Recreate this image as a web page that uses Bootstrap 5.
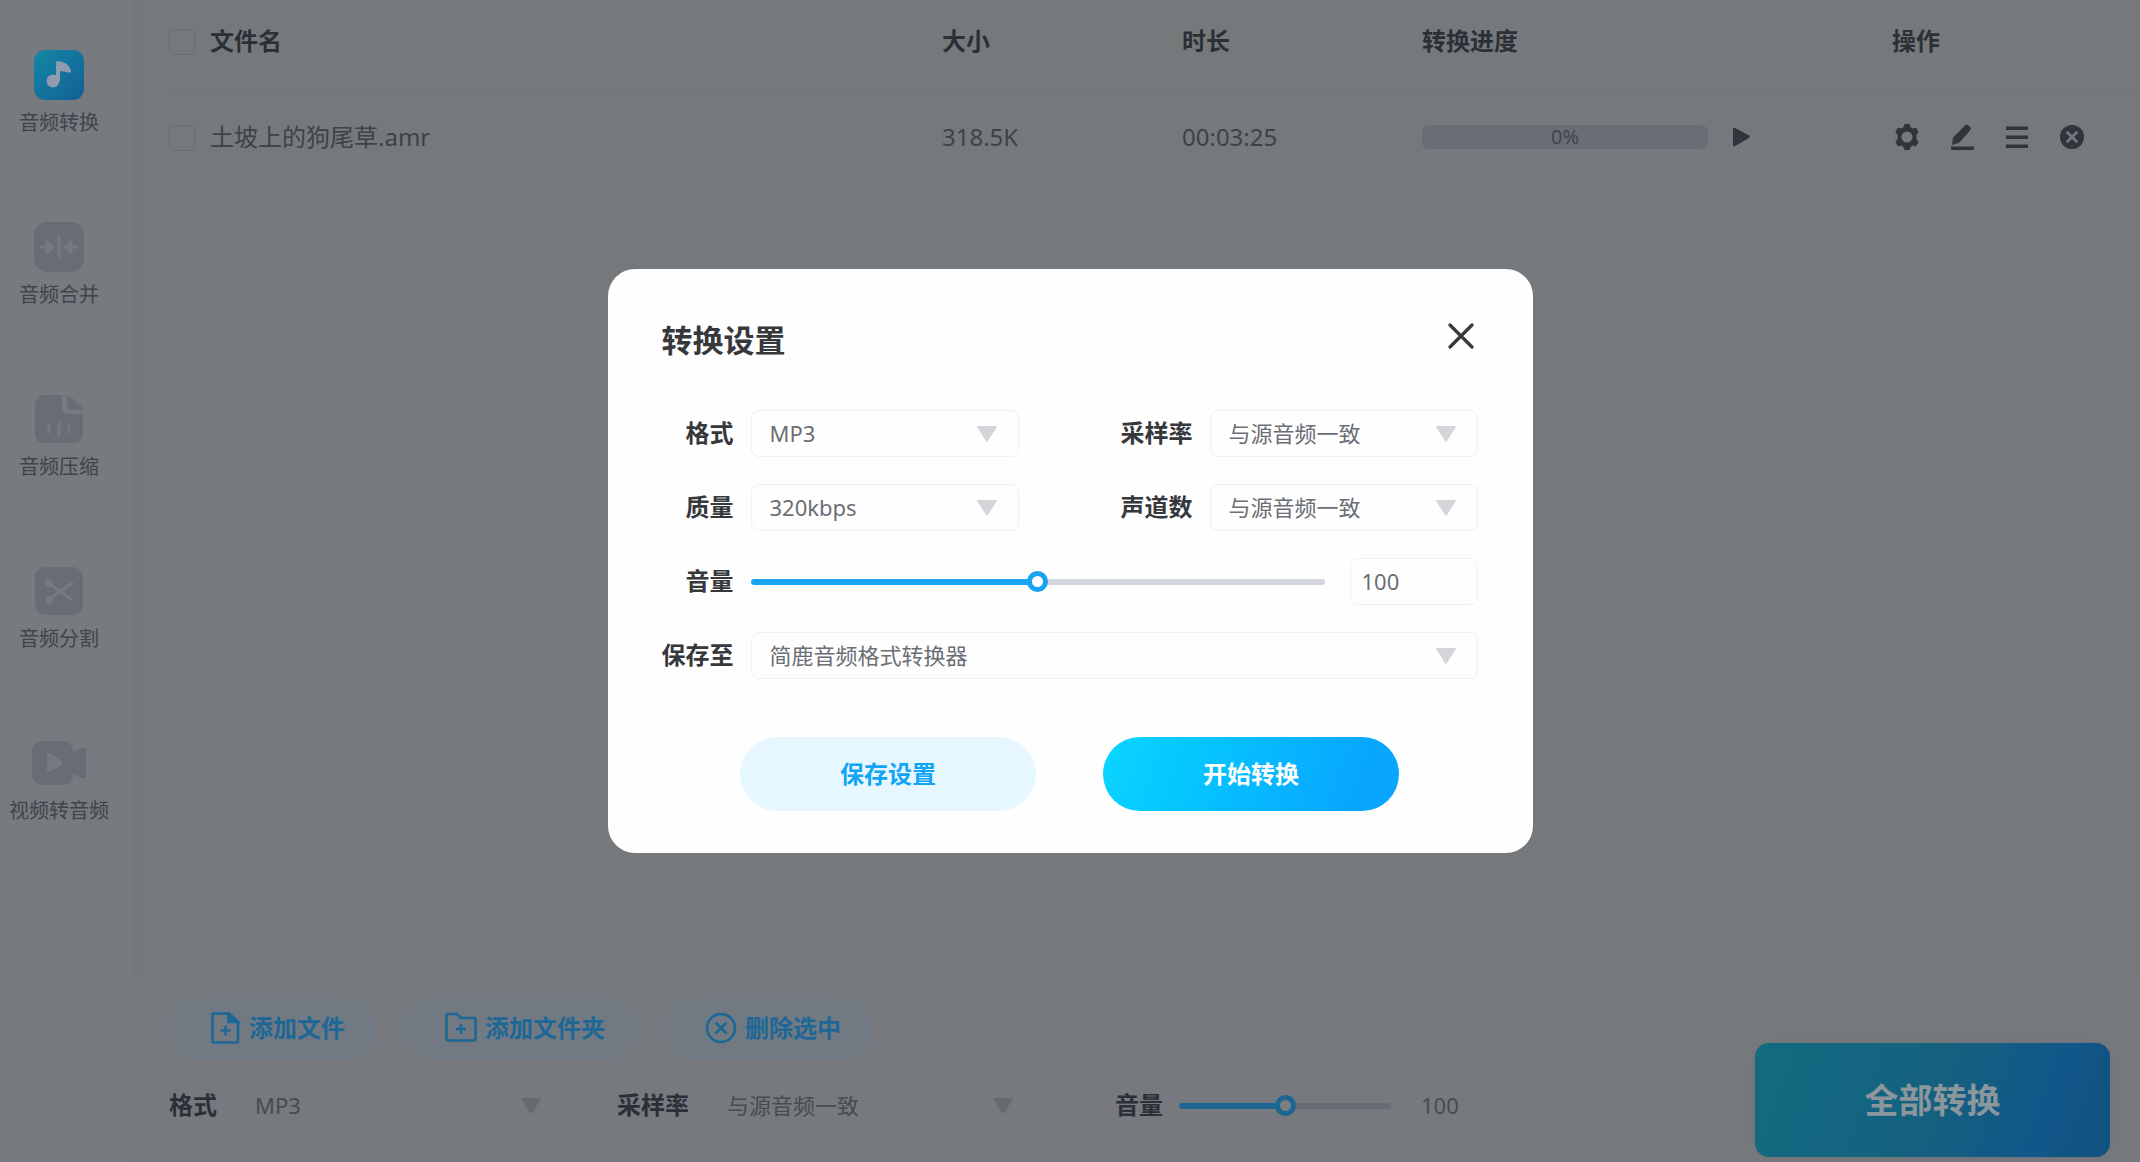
<!DOCTYPE html>
<html lang="zh-CN">
<head>
<meta charset="utf-8">
<meta name="viewport" content="width=device-width, initial-scale=1">
<title>音频格式转换器</title>
<link href="https://cdn.jsdelivr.net/npm/bootstrap@5.3.0/dist/css/bootstrap.min.css" rel="stylesheet">
<style>
  :root {
    --page: #75797c;
    --panel: #777a7f;
    --ink: #2b3037;
    --ink-soft: #3e4247;
    --muted: #696c74;
    --blue-dim: #1d6796;
    --blue: #1aa3f0;
  }
  body {
    background: var(--page);
    color: var(--ink-soft);
    font-family: "Noto Sans", "Noto Sans CJK SC", sans-serif;
    font-size: 24px;
    line-height: 32px;
  }
  /* side menu */
  .side-menu {
    width: 130px;
    padding: 50px 12px 0 0;
    gap: 85px;
    background: var(--panel);
    box-shadow: 2px 0 8px #72758066;
  }
  .side-link {
    color: #41444b;
    font-size: 20px;
    line-height: 28px;
    gap: 9px;
  }
  .side-link svg { width: 54px; height: 50px; }
  /* file list */
  .list-area { padding-left: 39px; }
  .file-table { table-layout: fixed; margin: 0; --bs-table-bg: transparent; }
  .file-table > :not(caption) > * > * {
    padding: 0;
    border: 0;
    color: var(--ink-soft);
    vertical-align: middle;
  }
  .file-table thead th { height: 88px; padding-bottom: 5px; color: var(--ink); border-bottom: 1px solid #737679; }
  .file-table tbody td { height: 98px; }
  .col-mid { width: 240px; }
  .col-bar { width: 470px; }
  .col-ops { width: 248px; }
  .form-check-input.pick {
    width: 26px;
    height: 26px;
    margin: 2px 15px 0 0;
    border: 1px solid #696d73;
    border-radius: 4px;
    background-color: transparent;
    flex: none;
  }
  .file-progress {
    width: 286px;
    height: 24px;
    border-radius: 7px;
    background: #6a6c76;
    color: #42454c;
    font-size: 20px;
    line-height: 24px;
  }
  .icon-btn { border: 0; padding: 0; background: none; color: #2f353c; line-height: 0; }
  .ops-group { gap: 27px; padding-left: 1px; }
  /* bottom bar */
  .bottom-bar { padding: 24px 30px 5px 39px; background: #76797d; }
  .bar-tools { margin-bottom: 28px; }
  .tool-btn {
    height: 62px;
    padding: 0 32px 2px 40px;
    gap: 8px;
    border: 0;
    border-radius: 31px;
    background: #717983;
    color: var(--blue-dim);
    font-size: 24px;
    font-weight: 700;
  }
  .tool-row { gap: 28px; }
  .quick-row { margin-top: 22px; }
  .field-label { color: var(--ink); font-weight: 700; margin: 0; padding-bottom: 2px; white-space: nowrap; flex: none; }
  .form-select.pick-list, .form-control.num-box {
    height: 47px;
    border: 1px solid #f0f1f2;
    border-radius: 8px;
    color: #6b6e74;
    font-size: 22px;
    line-height: 30px;
    padding: 0 40px 2px 18px;
    background-color: transparent;
  }
  .form-control.num-box { padding: 0 11px 2px; width: 128px; flex: none; }
  .form-select.pick-list {
    background-image: url("data:image/svg+xml,%3Csvg xmlns='http://www.w3.org/2000/svg' viewBox='0 0 22 18'%3E%3Cpath d='M2 1h18q1.500 0 .6 1.500L12 16q-1 1.500-2 0L1.400 2.500Q.5 1 2 1z' fill='%23d3d5d8'/%3E%3C/svg%3E");
    background-size: 22px 18px;
    background-position: right 20px center;
  }
  .quick-row .pick-list, .quick-row .num-box { border-color: #727579; color: #484b50; padding-left: 13px; }
  .quick-row .pick-list {
    background-image: url("data:image/svg+xml,%3Csvg xmlns='http://www.w3.org/2000/svg' viewBox='0 0 22 18'%3E%3Cpath d='M2 1h18q1.500 0 .6 1.500L12 16q-1 1.500-2 0L1.400 2.500Q.5 1 2 1z' fill='%23666a70'/%3E%3C/svg%3E");
  }
  .quick-row .pick-list { width: 322px; }
  .quick-row .num-box { width: 96px; }
  .quick-row .form-range { width: 212px; }
  .quick-gap { margin-left: 54px; }
  .quick-gap-wide { margin-left: 80px; }
  .form-range.vol {
    --fill: var(--blue);
    --rest: #d3d6de;
    --hole: #fff;
    height: 24px;
  }
  .quick-row .form-range.vol { --fill: #1d6592; --rest: #686b73; --hole: #7b7f84; }
  .form-range.vol::-webkit-slider-runnable-track {
    height: 6px;
    border-radius: 3px;
    background: linear-gradient(90deg, var(--fill) 50%, var(--rest) 50%);
  }
  .form-range.vol::-webkit-slider-thumb {
    width: 21px;
    height: 21px;
    margin-top: -8px;
    border: 5px solid var(--fill);
    background: var(--hole);
    box-shadow: none;
  }
  .all-btn {
    width: 355px;
    height: 114px;
    border: 0;
    border-radius: 14px;
    background: linear-gradient(110deg, #126b80, #15617f 50%, #11578a 80%, #12527d);
    box-shadow: 0 0 10px #6c708088;
    color: #8b969d;
    font-size: 34px;
    font-weight: 700;
  }
  /* settings dialog */
  .settings-layer { padding-bottom: 40px; }
  .settings-box {
    width: 925px;
    max-width: 100%;
    padding: 51px 55px 42px 54px;
    border: 0;
    border-radius: 27px;
    background: #fefefe;
  }
  .settings-title { font-size: 31px; line-height: 40px; font-weight: 700; color: #36383b; margin: 0; }
  .settings-box .field-label { width: 72px; text-align: right; color: #36383b; }
  .close-btn { border: 0; padding: 0 4px 8px; background: none; line-height: 0; }
  .settings-rows { margin-top: 50px; gap: 27px; }
  .field-pair { gap: 102px; }
  .field-cell { gap: 17px; flex: 1 1 0; min-width: 0; }
  .dialog-actions { margin-top: 58px; gap: 67px; }
  .pill-btn { width: 296px; height: 74px; border: 0; border-radius: 37px; font-size: 24px; font-weight: 700; }
  .pill-save { background: #e7f7ff; color: #12a5f5; }
  .pill-start { background: linear-gradient(110deg, #0ad3ff 5%, #05c6ff 30%, #08a6ff 85%); color: #fff; }
</style>
</head>
<body>
<div class="d-flex min-vh-100">
  <nav class="side-menu d-flex flex-column align-items-center flex-shrink-0" aria-label="功能">
    <a href="#" class="side-link d-flex flex-column align-items-center text-decoration-none text-nowrap">
      <svg viewBox="0 0 54 50" aria-hidden="true">
        <defs><linearGradient id="gTile" x1="0" y1="0" x2="1" y2="1"><stop offset="0" stop-color="#1487a5"/><stop offset="1" stop-color="#126094"/></linearGradient></defs>
        <rect x="2" width="50" height="50" rx="11" fill="url(#gTile)"/>
        <circle cx="21" cy="31" r="6.500" fill="#8f9bb0"/>
        <path d="M24 31V13q0-2.500 2.500-2l5 1.500q6 2 7.500 8.500.3 2-2 1.600L28 21v10z" fill="#8f9bb0"/>
      </svg>
      音频转换</a>
    <a href="#" class="side-link d-flex flex-column align-items-center text-decoration-none text-nowrap">
      <svg viewBox="0 0 54 50" aria-hidden="true">
        <rect x="2" width="50" height="50" rx="13" fill="#696c74"/>
        <g stroke="#767980" stroke-width="3" stroke-linecap="round"><path d="M27 15v20M9 25h8M37 25h8M15 20v10M39 20v10"/></g>
        <path d="M16 19l7 6-7 6zM38 19l-7 6 7 6z" fill="#767980"/>
      </svg>
      音频合并</a>
    <a href="#" class="side-link d-flex flex-column align-items-center text-decoration-none text-nowrap">
      <svg viewBox="0 0 54 50" aria-hidden="true">
        <path d="M13 1h17v13q0 6 6 6h15v19q0 10-10 10H13Q3 49 3 39V11Q3 1 13 1z" fill="#696c74"/>
        <path d="M35 2q2 0 5 2l8 7q3 3 3 5H39q-4 0-4-4z" fill="#696c74"/>
        <g stroke="#767980" stroke-width="3" stroke-linecap="round"><path d="M17 32v6M27 29v12M37 32v6"/></g>
      </svg>
      音频压缩</a>
    <a href="#" class="side-link d-flex flex-column align-items-center text-decoration-none text-nowrap">
      <svg viewBox="0 0 54 50" aria-hidden="true">
        <rect x="3" y="1" width="48" height="48" rx="11" fill="#696c74"/>
        <circle cx="17" cy="17" r="4" fill="#767980"/><circle cx="17" cy="34" r="4" fill="#767980"/>
        <path d="M18 18l22 16M18 33l22-16" stroke="#767980" stroke-width="3" stroke-linecap="round"/>
      </svg>
      音频分割</a>
    <a href="#" class="side-link d-flex flex-column align-items-center text-decoration-none text-nowrap">
      <svg viewBox="0 0 54 50" aria-hidden="true">
        <rect x="0" y="3" width="41" height="44" rx="10" fill="#696c74"/>
        <path d="M41 14l9-4q4-1 4 3v24q0 4-4 3l-9-4z" fill="#696c74"/>
        <path d="M15 17q0-3 3-2l11 8q2 2 0 4l-11 7q-3 1-3-2z" fill="#767980"/>
      </svg>
      视频转音频</a>
  </nav>

  <div class="d-flex flex-column flex-grow-1">
    <main class="list-area flex-grow-1">
      <table class="table file-table">
        <colgroup><col><col class="col-mid"><col class="col-mid"><col class="col-bar"><col class="col-ops"></colgroup>
        <thead>
          <tr>
            <th scope="col"><div class="d-flex align-items-center"><input class="form-check-input pick" type="checkbox" id="pickAll"><label for="pickAll">文件名</label></div></th>
            <th scope="col">大小</th>
            <th scope="col">时长</th>
            <th scope="col">转换进度</th>
            <th scope="col">操作</th>
          </tr>
        </thead>
        <tbody>
          <tr>
            <td><div class="d-flex align-items-center"><input class="form-check-input pick" type="checkbox" id="pickOne"><label for="pickOne">土坡上的狗尾草.amr</label></div></td>
            <td>318.5K</td>
            <td>00:03:25</td>
            <td>
              <div class="d-flex align-items-center gap-4">
                <div class="file-progress text-center" role="progressbar" aria-label="转换进度" aria-valuenow="0" aria-valuemin="0" aria-valuemax="100">0%</div>
                <button type="button" class="icon-btn" aria-label="播放"><svg width="19" height="20" viewBox="0 0 19 20"><path d="M1 2q0-2 2-1l14 7.500q1.500 1.200 0 2.500L3 19q-2 1-2-1z" fill="currentColor"/></svg></button>
              </div>
            </td>
            <td>
              <div class="d-flex align-items-center ops-group">
                <button type="button" class="icon-btn" aria-label="设置"><svg width="28" height="28" viewBox="0 0 28 28"><path fill="currentColor" fill-rule="evenodd" d="M11.500 1h5l1.200 3.300 2 1.100 3.400-.6 2.500 4.300L23.400 12v4l2.200 2.900-2.500 4.300-3.400-.6-2 1.100L16.500 27h-5l-1.200-3.300-2-1.100-3.400.6-2.500-4.300L4.600 16v-4L2.400 9.100l2.500-4.300 3.400.6 2-1.100zM14 8.500a5.500 5.500 0 1 0 0 11 5.500 5.500 0 0 0 0-11z"/></svg></button>
                <button type="button" class="icon-btn" aria-label="编辑"><svg width="28" height="28" viewBox="0 0 28 28" fill="currentColor"><path d="M17 2.500q1.500-1.500 3.200-.2l2 1.600q1.500 1.300.2 3L11.500 19.500 4 22l1-7.500z"/><rect x="3" y="23.500" width="23" height="3.500" rx="1"/></svg></button>
                <button type="button" class="icon-btn" aria-label="列表"><svg width="28" height="28" viewBox="0 0 28 28" fill="currentColor"><rect x="3" y="3.500" width="22" height="3.500"/><rect x="3" y="12.500" width="22" height="3.500"/><rect x="3" y="21.500" width="22" height="3.500"/></svg></button>
                <button type="button" class="icon-btn" aria-label="移除"><svg width="28" height="28" viewBox="0 0 28 28"><circle cx="14" cy="14" r="12" fill="currentColor"/><path d="M9.500 9.500l9 9M18.500 9.500l-9 9" stroke="#75797c" stroke-width="2.800" stroke-linecap="round"/></svg></button>
              </div>
            </td>
          </tr>
        </tbody>
      </table>
    </main>

    <footer class="bottom-bar d-flex justify-content-between align-items-end">
      <div class="bar-tools">
        <div class="d-flex tool-row">
          <button type="button" class="tool-btn d-flex align-items-center">
            <svg width="32" height="32" viewBox="0 0 32 32" fill="none" stroke="currentColor" stroke-width="2.600" aria-hidden="true"><path d="M5 1.500h15L29 10v19q0 1.500-1.500 1.500H5q-1.500 0-1.500-1.500V3Q3.500 1.500 5 1.500z"/><path d="M19.500 1.500V10H29z" fill="currentColor"/><path d="M16.500 13.500v10M11.500 18.500h10"/></svg>
            添加文件</button>
          <button type="button" class="tool-btn d-flex align-items-center">
            <svg width="32" height="32" viewBox="0 0 32 32" fill="none" stroke="currentColor" stroke-width="2.600" aria-hidden="true"><path d="M3 2h9l4 4h13q1.500 0 1.500 1.500V27q0 1.500-1.500 1.500H3q-1.500 0-1.500-1.500V3.500Q1.500 2 3 2z"/><path d="M16 12v10M11 17h10"/></svg>
            添加文件夹</button>
          <button type="button" class="tool-btn d-flex align-items-center">
            <svg width="32" height="32" viewBox="0 0 32 32" fill="none" stroke="currentColor" stroke-width="2.600" aria-hidden="true"><circle cx="16" cy="16" r="14"/><path d="M10.500 10.500l11 11M21.500 10.500l-11 11"/></svg>
            删除选中</button>
        </div>
        <div class="quick-row d-flex align-items-center">
          <label class="field-label me-4" for="qFormat">格式</label>
          <select class="form-select pick-list" id="qFormat"><option>MP3</option></select>
          <label class="field-label quick-gap me-4" for="qRate">采样率</label>
          <select class="form-select pick-list" id="qRate"><option>与源音频一致</option></select>
          <label class="field-label quick-gap-wide me-3" for="qVol">音量</label>
          <input type="range" class="form-range vol" id="qVol" min="0" max="200" value="100">
          <input type="text" class="form-control num-box ms-3" aria-label="音量数值" value="100">
        </div>
      </div>
      <button type="button" class="all-btn">全部转换</button>
    </footer>
  </div>
</div>

<div class="modal d-flex align-items-center justify-content-center settings-layer" role="dialog" aria-modal="true" aria-labelledby="dlgTitle">
  <form class="settings-box">
    <div class="d-flex justify-content-between align-items-center">
      <h1 class="settings-title" id="dlgTitle">转换设置</h1>
      <button type="button" class="close-btn" aria-label="关闭"><svg width="26" height="26" viewBox="0 0 26 26"><path d="M2 2l22 22M24 2L2 24" stroke="#36383b" stroke-width="3.200" stroke-linecap="round"/></svg></button>
    </div>
    <div class="settings-rows d-flex flex-column">
      <div class="d-flex field-pair">
        <div class="d-flex align-items-center field-cell">
          <label class="field-label" for="sFormat">格式</label>
          <select class="form-select pick-list" id="sFormat"><option>MP3</option></select>
        </div>
        <div class="d-flex align-items-center field-cell">
          <label class="field-label" for="sRate">采样率</label>
          <select class="form-select pick-list" id="sRate"><option>与源音频一致</option></select>
        </div>
      </div>
      <div class="d-flex field-pair">
        <div class="d-flex align-items-center field-cell">
          <label class="field-label" for="sQuality">质量</label>
          <select class="form-select pick-list" id="sQuality"><option>320kbps</option></select>
        </div>
        <div class="d-flex align-items-center field-cell">
          <label class="field-label" for="sChannel">声道数</label>
          <select class="form-select pick-list" id="sChannel"><option>与源音频一致</option></select>
        </div>
      </div>
      <div class="d-flex align-items-center field-cell">
        <label class="field-label" for="sVol">音量</label>
        <input type="range" class="form-range vol" id="sVol" min="0" max="200" value="100">
        <input type="text" class="form-control num-box ms-2" aria-label="音量数值" value="100">
      </div>
      <div class="d-flex align-items-center field-cell">
        <label class="field-label" for="sPath">保存至</label>
        <select class="form-select pick-list" id="sPath"><option>简鹿音频格式转换器</option></select>
      </div>
    </div>
    <div class="dialog-actions d-flex justify-content-center">
      <button type="button" class="pill-btn pill-save">保存设置</button>
      <button type="button" class="pill-btn pill-start">开始转换</button>
    </div>
  </form>
</div>
<script src="https://cdn.jsdelivr.net/npm/bootstrap@5.3.0/dist/js/bootstrap.bundle.min.js"></script>
</body>
</html>
